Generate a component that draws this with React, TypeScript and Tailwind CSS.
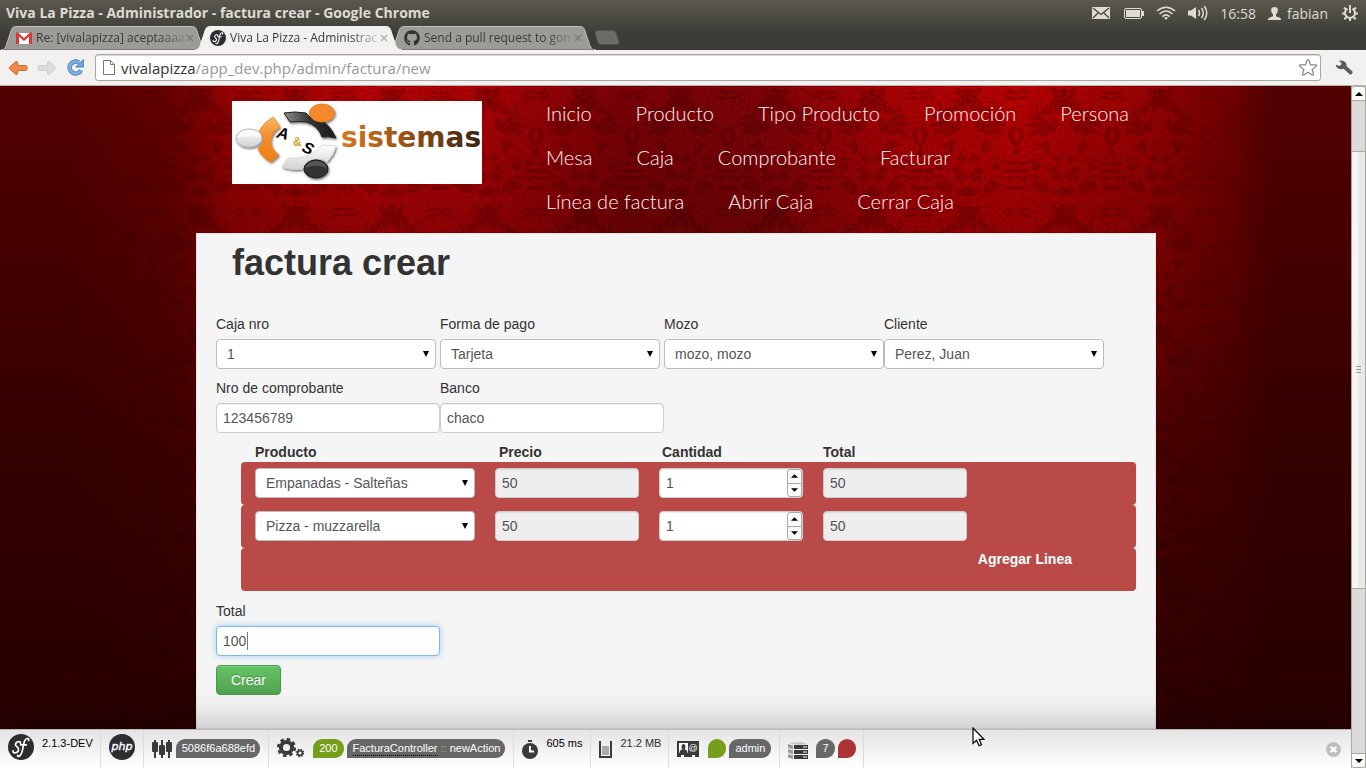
import type { ReactNode } from "react";
import { FaGithub } from "react-icons/fa";

function Sf({ className }: { className: string }) {
  return (
    <svg viewBox="0 0 26 26" className={className} aria-hidden="true">
      <circle cx="13" cy="13" r="13" fill="#2d2c31" />
      <g fill="none" stroke="#fff" strokeWidth="1.7" strokeLinecap="round" strokeLinejoin="round">
        <path d="M12.4 9.6c.6-1.7-.6-2.3-2-2-1.900.3-3.200 1.900-2.800 3.500.3 1.500 2.900 2 2.900 4.200 0 2.200-1.600 3.500-3.600 3.500-1.500 0-2.400-.900-1.800-2" />
        <path d="M20.600 6.500c.5-1.600-.500-2.200-1.500-2-2.300.4-3 3.300-3.600 6.500-.800 4.500-1.400 9.600-4.200 11.200-.900.500-1.900.2-1.700-.8M12.800 10.900h5.400" />
      </g>
    </svg>
  );
}

function Damask() {
  const half = (
    <g>
      <path d="M49 2c4 5 8 3 12-1 1 7-3 10-8 10 6 0 10 3 10 9-6 0-11-3-14-9z" />
      <path d="M49 14c7 2 9 7 8 13-5-2-8-6-8-13zM60 22c7-3 12 1 12 6-5 1-10-1-12-6z" />
      <path d="M64 38c6-8 15-11 19-6-7 0-10 3-12 7 6-4 12-4 16 1-7-2-11 1-15 4 6-2 10 0 12 5-7-4-11-1-16 1-4-3-6-7-4-12z" />
      <path d="M62 46c-6-2-7-8-4-14 1 5 4 6 7 8zM66 54c-4 4-4 10 1 14 1-5 4-8 8-9-4-1-6-3-9-5z" />
      <path d="M52 71c2-4 8-2 6 3-2 4-8 1-6-3zM56 82c5-2 8 1 8 4-4 2-7 0-8-4zM50 90c5-5 9-2 13 2-4 4-10 3-13-2z" />
      <path d="M72 80c5-5 9-3 9 2-3 3-7 2-9-2zM66 98c6-5 12-3 17 2-7 1-9 7-15 7-4-2-4-5-2-9zM50 101c3 3 6 4 10 4-3 4-7 6-11 4z" />
      <path d="M86 84h11v2H86zM88 101h9v2h-9zM84 8q6-6 13 0M82 14q7-6 15-1M76 16q3 8-3 14M70 74q8-3 14 2t13 0M72 92q8-5 14 0t11-2" />
      <path d="M97 60c-8-5-9-14-5-18 3-2 5 1 3 3-3 4-2 9 2 12z" />
      <path d="M97 70c-3-2-3-6 0-7z" />
    </g>
  );
  return (
    <svg className="[grid-area:1/1] h-full w-full" aria-hidden="true">
      <defs>
        <linearGradient id="glow">
          <stop offset="0.05" stopColor="#700000" stopOpacity="0" />
          <stop offset="0.12" stopColor="#700000" stopOpacity="0.6" />
          <stop offset="0.17" stopColor="#a00000" />
          <stop offset="0.27" stopColor="#bc0004" />
          <stop offset="0.36" stopColor="#b00004" />
          <stop offset="0.46" stopColor="#7c0206" />
          <stop offset="0.56" stopColor="#800408" />
          <stop offset="0.66" stopColor="#b00004" />
          <stop offset="0.75" stopColor="#c00000" />
          <stop offset="0.85" stopColor="#a00000" />
          <stop offset="0.915" stopColor="#760000" stopOpacity="0.8" />
          <stop offset="0.945" stopColor="#600000" stopOpacity="0" />
        </linearGradient>
        <linearGradient id="fade" x2="0" y2="1">
          <stop stopColor="#fff" />
          <stop offset="0.25" stopColor="#eee" />
          <stop offset="0.6" stopColor="#888" />
          <stop offset="1" stopColor="#222" />
        </linearGradient>
        <linearGradient id="across">
          <stop offset="0.07" stopColor="#000" />
          <stop offset="0.14" stopColor="#fff" />
          <stop offset="0.87" stopColor="#fff" />
          <stop offset="0.93" stopColor="#000" />
        </linearGradient>
        <linearGradient id="night" x2="0" y2="1">
          <stop stopColor="#000" stopOpacity="0" />
          <stop offset="0.55" stopColor="#000" stopOpacity="0.36" />
          <stop offset="1" stopColor="#000" stopOpacity="0.52" />
        </linearGradient>
        <mask id="glowMask"><rect width="100%" height="100%" fill="url(#fade)" /></mask>
        <mask id="acrossMask"><rect width="100%" height="100%" fill="url(#across)" /></mask>
        <pattern id="tile" x="152" y="0" width="96" height="117" patternUnits="userSpaceOnUse">
          <g fill="#200000" fillOpacity="0.16" stroke="#200000" strokeOpacity="0.3" strokeWidth="0.9">
            <g transform="translate(-1 0)">{half}</g>
            <g transform="translate(97 0) scale(-1 1)">{half}</g>
          </g>
        </pattern>
        <filter id="grain" x="0" y="0" width="100%" height="100%">
          <feTurbulence type="fractalNoise" baseFrequency="0.45" numOctaves="2" seed="4" />
          <feColorMatrix values="0 0 0 0 0.1  0 0 0 0 0  0 0 0 0 0  5 0 0 0 -2.300" />
        </filter>
      </defs>
      <rect width="100%" height="100%" fill="#520000" />
      <g mask="url(#glowMask)"><rect width="100%" height="100%" fill="url(#glow)" /></g>
      <g mask="url(#acrossMask)">
        <rect width="100%" height="100%" fill="url(#tile)" />
        <rect width="100%" height="100%" filter="url(#grain)" opacity="0.42" />
      </g>
      <rect width="100%" height="100%" fill="url(#night)" />
    </svg>
  );
}

function Logo() {
  return (
    <svg viewBox="0 0 250 83" className="block h-[83px] w-[250px] bg-white" role="img" aria-label="A&S sistemas">
      <defs>
        <linearGradient id="word"><stop stopColor="#d9781c" /><stop offset="0.55" stopColor="#8a4a12" /><stop offset="1" stopColor="#3a2412" /></linearGradient>
        <linearGradient id="or" x2="0" y2="1"><stop stopColor="#fbb567" /><stop offset="0.5" stopColor="#f28a24" /><stop offset="1" stopColor="#ee7f16" /></linearGradient>
        <linearGradient id="dk"><stop stopColor="#8d8d8d" /><stop offset="0.5" stopColor="#333" /><stop offset="1" stopColor="#181818" /></linearGradient>
        <linearGradient id="wh" x2="0" y2="1"><stop stopColor="#fff" /><stop offset="1" stopColor="#d2d2d2" /></linearGradient>
        <filter id="sh" x="-20%" y="-20%" width="150%" height="150%"><feDropShadow dx="1" dy="1.5" stdDeviation="1.2" floodOpacity="0.55" /></filter>
      </defs>
      <g filter="url(#sh)">
        <path d="M52 12Q63 10 74 12Q79 19 90 20Q97 23 104 37Q97 35 90 36Q86 24 74 21Q66 20 58 21Z" fill="url(#dk)" stroke="#222" />
        <path d="M41 16L48 26C36 34 36 46 47 54L39 61C31 57 27 51 26 47Q32 43 31 37Q30 32 27 30Q32 21 41 16Z" fill="url(#or)" stroke="#e27a12" strokeWidth=".6" />
        <path d="M50 66L56 57Q79 59 90 44L104 45Q102 54 95 61Q90 57 82 58Q74 60 71 68Q60 70 50 66Z" fill="url(#wh)" stroke="#ccc" strokeWidth=".6" />
        <ellipse cx="17" cy="37" rx="13" ry="9" fill="url(#wh)" stroke="#bbb" />
        <ellipse cx="90" cy="12" rx="12.500" ry="9" fill="#f5882a" stroke="#e87b16" />
        <ellipse cx="84" cy="68" rx="12" ry="9" fill="#333" stroke="#191919" />
      </g>
      <path d="M5 37Q17 34 29 36Q27 29 17 29Q6 30 5 37Z" fill="#fff" opacity=".7" />
      <path d="M73 67Q84 62 95 67Q92 60 84 60Q75 60 73 67Z" fill="#fff" opacity=".18" />
      <g fontFamily="Liberation Sans, sans-serif" fontStyle="italic" fontWeight="700">
        <text x="45" y="38" fontSize="16" transform="rotate(14 52 33)">A</text>
        <text x="61" y="45" fontSize="12" fontStyle="normal" fill="#d9a21f">&amp;</text>
        <text x="71" y="53" fontSize="16" transform="rotate(24 77 47)">S</text>
      </g>
      <text x="109" y="46" fontFamily="DejaVu Sans, sans-serif" fontWeight="700" fontSize="28" fill="url(#word)">sistemas</text>
    </svg>
  );
}

function Tab({ icon, title, active }: { icon: ReactNode; title: string; active?: boolean }) {
  return (
    <div className={`-ml-[13px] grid h-6 w-[207px] ${active ? "z-10" : ""}`}>
      <svg viewBox="0 0 207 24" preserveAspectRatio="none" className="[grid-area:1/1] h-full w-full" aria-hidden="true">
        <path
          d="M0 24C4 24 5 20 6 17L10 5C11 1 13 .5 16 .5H190C193 .5 195 1 196 5L200 17C201 21 203 24 207 24Z"
          fill={active ? "#f2f1f0" : "#9c9b98"}
          stroke={active ? "#f2f1f0" : "#c0bfbb"}
          strokeWidth="1"
        />
        {!active && <path d="M2 23.500H205" stroke="#7b7a77" />}
      </svg>
      <div className="[grid-area:1/1] flex items-center pl-[15px] pr-[14px]">
        <span className="flex h-4 w-4 shrink-0">{icon}</span>
        <a href="#" className="ml-1 whitespace-nowrap text-[12px] leading-5 text-[#3a3935] [mask-image:linear-gradient(to_right,#000_82%,rgba(0,0,0,0.2))]">
          {title}
        </a>
        <button aria-label="Cerrar pestaña" className="ml-auto flex">
          <svg viewBox="0 0 8 8" className="h-2 w-2"><path d="M1 1l6 6M7 1L1 7" stroke={active ? "#b5b3af" : "#7d7c78"} strokeWidth="1.500" /></svg>
        </button>
      </div>
    </div>
  );
}

function Chrome() {
  return (
    <header className="shrink-0 font-['Open_Sans','Noto_Sans',sans-serif]">
      <div className="bg-gradient-to-b from-[#5b594e] via-[#44433d] to-[#3c3b37] to-70%">
        <div className="flex h-[26px] items-center pl-[6px] pr-2 text-[#dfdbd2]">
          <h1 className="text-[14px] font-bold leading-5">Viva La Pizza - Administrador - factura crear - Google Chrome</h1>
          <div className="ml-auto flex items-center text-[14px]">
            <svg viewBox="0 0 18 12" className="mr-[14px] h-3 w-[18px]"><path d="M0 0h18v12H0z" fill="#dfdbd2" /><path d="M1 1l8 6.500L17 1M1 11l5.500-5.500M17 11l-5.500-5.500" fill="none" stroke="#454139" strokeWidth="1.200" /></svg>
            <svg viewBox="0 0 20 11" className="mr-3 h-[11px] w-5"><rect x=".5" y=".5" width="17" height="10" rx="1.500" fill="none" stroke="#dfdbd2" /><path d="M2 2h14v7H2zM18 3h2v5h-2z" fill="#dfdbd2" /></svg>
            <svg viewBox="0 0 20 14" className="mr-3 h-[14px] w-5" fill="none" stroke="#dfdbd2" strokeWidth="1.600"><path d="M1 5Q10-2.500 19 5M3.500 8Q10 2 16.500 8M6.300 10.800Q10 7 13.700 10.800" /><path d="M10 14l-2-2.200q2-1.500 4 0z" fill="#dfdbd2" stroke="none" /></svg>
            <svg viewBox="0 0 20 16" className="mr-3 h-4 w-5" fill="none" stroke="#dfdbd2" strokeWidth="1.500"><path d="M0 5.500h3L8 2v12l-5-3.500H0z" fill="#dfdbd2" stroke="none" /><path d="M10.500 5q2 3 0 6M13.500 3q3.500 5 0 10M16.300 1q5 7 0 14" /></svg>
            <span className="mr-3">16:58</span>
            <svg viewBox="0 0 13 13" className="mr-[6px] h-[13px] w-[13px]" fill="#dfdbd2"><path d="M6.500 0C9 0 10 1.500 9.800 3.500 9.700 5.500 8.700 6.800 8 7.300v2L12 10.700q1 .5 1 2.300H0q0-1.800 1-2.300L5 9.300v-2C4.300 6.800 3.300 5.500 3.200 3.500 3 1.500 4 0 6.500 0z" /></svg>
            <span className="mr-[14px]">fabian</span>
            <svg viewBox="0 0 16 16" className="h-4 w-4" fill="none" stroke="#dfdbd2"><path d="M5.500 3.600a5 5 0 1 0 5 0" strokeWidth="2" /><path d="M8 0v8" strokeWidth="2" /><path d="M13 8.500h3M0 8.500h3M8 13v3M11.700 12.200l2 2M4.300 12.200l-2 2M12 4.500l2-2M4 4.500l-2-2" strokeWidth="2" /></svg>
          </div>
        </div>
        <nav className="flex h-6 items-end pl-[14px]" aria-label="Pestañas">
          <Tab
            title="Re: [vivalapizza] aceptaaaa"
            icon={<svg viewBox="0 0 16 16" className="h-4 w-4"><path d="M1 3h14v11H1z" fill="#fff" /><path d="M0 3.500Q0 2 1.500 2L8 8l6.500-6Q16 2 16 3.500V14h-3V6.500L8 11 3 6.500V14H0z" fill="#d83b36" /></svg>}
          />
          <Tab active title="Viva La Pizza - Administrac" icon={<Sf className="h-4 w-4" />} />
          <Tab title="Send a pull request to gon" icon={<FaGithub className="h-4 w-4 text-[#33322f]" />} />
          <button aria-label="Nueva pestaña" className="-ml-[2px] mb-[5px] flex">
            <svg viewBox="0 0 26 15" className="h-[15px] w-[26px]"><path d="M3 .5H19Q21 .5 22 3L25 12Q25.500 14.500 23 14.500H7Q4.500 14.500 3.700 12L1 3Q.5 .5 3 .5Z" fill="#6c6b67" stroke="#53524e" /></svg>
          </button>
        </nav>
      </div>
      <div className="flex h-9 items-center border-b border-[#b5b2ad] bg-[#f2f1f0] pl-2 pr-[13px]">
        <button aria-label="Atrás" className="mr-[9px] flex"><svg viewBox="0 0 20 16" className="h-4 w-5"><path d="M8 1.500Q9.500 1 9.500 3V5.500H17.500Q19 5.500 19 7v2q0 1.500-1.500 1.500H9.500V13q0 2-1.500 1.500L1.500 8.800Q1 8 1.500 7.200z" fill="#ef8a4a" stroke="#d1672b" /></svg></button>
        <button aria-label="Adelante" className="mr-[10px] flex"><svg viewBox="0 0 20 16" className="h-4 w-5"><path d="M12 1.500Q10.500 1 10.500 3V5.500H2.500Q1 5.500 1 7v2q0 1.500 1.500 1.500H10.500V13q0 2 1.500 1.500L18.500 8.800Q19 8 18.500 7.200z" fill="#dedcd9" stroke="#cfcdca" /></svg></button>
        <button aria-label="Recargar" className="mr-[11px] flex"><svg viewBox="0 0 17 17" className="h-[17px] w-[17px]"><path d="M14 11.200A6 6 0 1 1 11.800 3.500" fill="none" stroke="#4a84c0" strokeWidth="4.400" /><path d="M16.300 .5V8H8.800z" fill="#6ea6de" stroke="#4a84c0" /><path d="M14 11.200A6 6 0 1 1 12.500 4" fill="none" stroke="#7db1e4" strokeWidth="2.600" /></svg></button>
        <div className="flex h-[27px] min-w-0 flex-1 items-center rounded-[3px] border border-[#a9a6a0] bg-white px-[7px] shadow-[inset_0_1px_0_#dddbd8]">
          <svg viewBox="0 0 12 15" className="h-[15px] w-3 shrink-0" fill="none" stroke="#777"><path d="M.5 .5H7.500L11.500 4.500V14.500H.5ZM7.500 .5V4.500H11.500" /></svg>
          <a href="#" className="ml-[6px] flex-1 text-[15px] leading-5 text-[#9a9895]"><span className="text-[#33322f]">vivalapizza</span>/app_dev.php/admin/factura/new</a>
          <button aria-label="Agregar a favoritos" className="-mr-[5px] flex"><svg viewBox="0 0 20 19" className="h-[19px] w-5"><path d="M10 1.500q.7 0 1 .8l1.500 4.500 5 .1q1.600.3.600 1.500l-4 3 1.400 4.700q.2 1.500-1.300.9L10 14.200 5.800 17q-1.500.6-1.300-.9l1.400-4.700-4-3q-1-1.200.6-1.500l5-.1L9 2.300q.3-.8 1-.8z" fill="#fff" stroke="#888" strokeWidth="1.200" /></svg></button>
        </div>
        <button aria-label="Configurar" className="ml-[14px] flex"><svg viewBox="0 0 18 16" className="h-4 w-[18px]"><path d="M4 .8Q9-.5 11 3q.8 1.500.4 3l5.600 5q1.300 1.300 0 2.700-1.300 1.300-2.700.2L8.600 8.800Q4 10.300 1.500 7 .8 6 .8 4.800L4.600 6 6.800 3.700z" fill="#5d5c5a" /></svg></button>
      </div>
    </header>
  );
}

const menu = [
  ["Inicio", "Producto", "Tipo Producto", "Promoción", "Persona"],
  ["Mesa", "Caja", "Comprobante", "Facturar"],
  ["Línea de factura", "Abrir Caja", "Cerrar Caja"],
];

const control = "h-[30px] rounded-[4px] border border-[#ccc] px-[6px] text-[14px] leading-5 text-[#555] shadow-[inset_0_1px_1px_rgba(0,0,0,0.075)] outline-none";

function Select({ id, value, label }: { id: string; value: string; label?: string }) {
  return (
    <div className="relative w-[220px]">
      <select id={id} aria-label={label} className="block h-[30px] w-full appearance-none rounded-[4px] border border-[#bbb] bg-white pl-[10px] text-[14px] leading-5 text-[#555] outline-none">
        <option>{value}</option>
      </select>
      <svg viewBox="0 0 6 6" className="pointer-events-none absolute right-[7px] top-3 h-[6px] w-[6px]"><path d="M0 0h6L3 6z" /></svg>
    </div>
  );
}

function Field({ id, label, children }: { id: string; label: string; children: ReactNode }) {
  return (
    <div className="pb-[9px]">
      <label htmlFor={id} className="mb-[5px] block leading-5">{label}</label>
      {children}
    </div>
  );
}

function Quantity({ id }: { id: string }) {
  return (
    <div className="relative w-36">
      <input id={id} aria-label="Cantidad" type="number" defaultValue={1} className={`${control} block w-full bg-white [appearance:textfield] [&::-webkit-inner-spin-button]:appearance-none`} />
      <div className="absolute inset-y-px right-px flex w-[15px] flex-col divide-y divide-[#aaa] rounded-[3px] border border-[#aaa] bg-[#fbfaf9]">
        <button type="button" aria-label="Más" className="flex flex-1 items-center justify-center"><svg viewBox="0 0 8 4" className="h-1 w-[7px]"><path d="M0 4h8L4 0z" /></svg></button>
        <button type="button" aria-label="Menos" className="flex flex-1 items-center justify-center"><svg viewBox="0 0 8 4" className="h-1 w-[7px]"><path d="M0 0h8L4 4z" /></svg></button>
      </div>
    </div>
  );
}

const columns = "grid grid-cols-[220px_144px_144px_144px] items-start gap-x-5 pl-[14px]";

function Page() {
  return (
    <main className="[grid-area:1/1] mx-auto flex w-[961px] max-w-full flex-col pl-px">
      <div className="flex h-[147px] shrink-0 pl-9 pt-[15px]">
        <Logo />
        <nav aria-label="Menú" className="-mt-[10px] ml-16 font-['Lato',sans-serif] text-[20px] font-light text-[#fff4f4]">
          {menu.map((row) => (
            <ul key={row[0]} className="flex h-11 items-center gap-11 whitespace-nowrap">
              {row.map((item) => <li key={item}><a href="#">{item}</a></li>)}
            </ul>
          ))}
        </nav>
      </div>
      <div className="flex-1 border border-[#e6e6e6] bg-[#f5f5f5] px-[19px] text-[14px] text-[#333]">
        <h2 className="ml-4 mt-[9px] text-[36px] font-bold leading-10">factura crear</h2>
        <form className="mt-[31px]">
          <div className="grid grid-cols-[224px_224px_220px_220px]">
            <Field id="caja" label="Caja nro"><Select id="caja" value="1" /></Field>
            <Field id="pago" label="Forma de pago"><Select id="pago" value="Tarjeta" /></Field>
            <Field id="mozo" label="Mozo"><Select id="mozo" value="mozo, mozo" /></Field>
            <Field id="cliente" label="Cliente"><Select id="cliente" value="Perez, Juan" /></Field>
            <Field id="nro" label="Nro de comprobante"><input id="nro" defaultValue="123456789" className={`${control} block w-full bg-white`} /></Field>
            <Field id="banco" label="Banco"><input id="banco" defaultValue="chaco" className={`${control} block w-56 bg-white`} /></Field>
          </div>
          <div className="ml-[25px]">
            <div className={`${columns} font-bold leading-5`}>
              <span>Producto</span><span className="pl-1">Precio</span><span className="pl-[3px]">Cantidad</span><span>Total</span>
            </div>
            {["Empanadas - Salteñas", "Pizza - muzzarella"].map((name, i) => (
              <div key={name} className={`${columns} h-[43px] rounded-[4px] bg-[#b94a48] pt-[6px]`}>
                <Select id={`producto${i}`} label="Producto" value={name} />
                <input aria-label="Precio" readOnly value="50" className={`${control} bg-[#eee]`} />
                <Quantity id={`cantidad${i}`} />
                <input aria-label="Total de línea" readOnly value="50" className={`${control} bg-[#eee]`} />
              </div>
            ))}
            <div className="flex h-[43px] items-start justify-end rounded-[4px] bg-[#b94a48] pr-16 pt-px">
              <a href="#" className="font-bold leading-5 text-white">Agregar Linea</a>
            </div>
          </div>
          <div className="mt-[10px]">
            <Field id="total" label="Total">
              <div className="relative w-56">
                <input id="total" defaultValue="100" className="block h-[30px] w-full rounded-[4px] border border-[#7cbcec] bg-white px-[6px] text-[14px] leading-5 text-[#555] shadow-[0_0_6px_rgba(82,168,236,0.5)] outline-none" />
                <span className="absolute left-[31px] top-[6px] h-[18px] w-px bg-[#777]" />
              </div>
            </Field>
          </div>
          <button type="submit" className="block h-[30px] rounded-[4px] border border-[#4a9a4a] bg-gradient-to-b from-[#62c462] to-[#51a351] px-[14px] leading-5 text-white shadow-[inset_0_1px_0_rgba(255,255,255,0.2)] [text-shadow:0_-1px_0_rgba(0,0,0,0.25)]">Crear</button>
        </form>
      </div>
    </main>
  );
}

function Section({ children, className }: { children: ReactNode; className: string }) {
  return <li className={`flex h-full shrink-0 border-r border-[#dcdcdc] pt-1 ${className}`}>{children}</li>;
}

function Badge({ children, className }: { children?: ReactNode; className: string }) {
  return <span className={`mt-[5px] flex h-[19px] items-center whitespace-nowrap rounded-[9px] rounded-bl-none text-white ${className}`}>{children}</span>;
}

function DebugBar() {
  return (
    <footer className="relative flex h-[39px] shrink-0 border-t border-[#bbb] bg-gradient-to-b from-[#e4e4e4] to-white font-['Liberation_Sans',Arial,sans-serif] text-[11px] text-black shadow-[0_0_40px_rgba(0,0,0,0.3)]">
      <ul className="flex h-full">
        <Section className="gap-2 pl-2 pr-[7px]"><Sf className="h-[26px] w-[26px]" /><span className="mt-px leading-4">2.1.3-DEV</span></Section>
        <Section className="px-2">
          <svg viewBox="0 0 26 26" className="h-[26px] w-[26px]"><circle cx="13" cy="13" r="13" fill="#2d2c31" /><text x="13" y="16" textAnchor="middle" fontFamily="DejaVu Sans, sans-serif" fontStyle="italic" fontSize="11" fill="#fff" stroke="#fff" strokeWidth=".4">php</text></svg>
        </Section>
        <Section className="gap-1 px-2">
          <svg viewBox="0 0 20 18" className="mt-[6px] h-[18px] w-5" fill="#3a3a3a"><path d="M2 0h2v18H2zM9 0h2v18H9zM16 0h2v18h-2z" /><rect y="2" width="6" height="10" rx="1" /><rect x="7" y="5" width="6" height="10" rx="1" /><rect x="14" y="2" width="6" height="10" rx="1" /></svg>
          <Badge className="bg-[#676767] pl-[6px] pr-[5px]">5086f6a688efd</Badge>
        </Section>
        <Section className="px-2">
          <svg viewBox="0 0 27 20" className="mr-[9px] mt-1 h-5 w-[27px]" fill="none" stroke="#3a3a3a"><circle cx="9.500" cy="9.500" r="5.600" strokeWidth="4" /><circle cx="9.500" cy="9.500" r="8.300" strokeWidth="2.500" strokeDasharray="3.500 3.018" /><circle cx="23" cy="15" r="2.400" strokeWidth="1.700" /><circle cx="23" cy="15" r="3.700" strokeWidth="1.200" strokeDasharray="1.500 1.406" /></svg>
          <Badge className="mr-[3px] bg-[#759e1a] px-[6px]">200</Badge>
          <Badge className="bg-[#676767] pl-[6px] pr-[5px]"><a href="#" className="border-b border-dotted border-black leading-[14px]">FacturaController</a><span className="mx-[3px] text-[#aaa]">::</span><span>newAction</span></Badge>
        </Section>
        <Section className="gap-2 px-2">
          <svg viewBox="0 0 16 19" className="mt-[6px] h-[19px] w-4"><path d="M6 0h4v2H6z" fill="#3a3a3a" /><circle cx="8" cy="11" r="8" fill="#3a3a3a" /><path d="M8 6v5.500h4" fill="none" stroke="#fff" strokeWidth="2" /></svg>
          <span className="mt-px leading-4">605 ms</span>
        </Section>
        <Section className="gap-2 pl-2 pr-[7px]">
          <svg viewBox="0 0 13 17" className="mt-[7px] h-[17px] w-[13px]"><path d="M1 0v16h11V0" fill="none" stroke="#3a3a3a" strokeWidth="2" /><path d="M3 5h7v9H3z" fill="#aaa" /></svg>
          <span className="mt-px leading-4 text-[#2f2f2f]">21.2 MB</span>
        </Section>
        <Section className="px-2">
          <svg viewBox="0 0 22 16" className="mr-[9px] mt-[7px] h-4 w-[22px]"><path d="M0 0h22v16H0z" fill="#3a3a3a" /><path d="M2 2h9v10H2z" fill="#fff" /><path d="M6.500 3q2 0 2 2.500Q8 8 7.500 8.300q3 .5 3 3.700h-8q0-3.200 3-3.700Q4.500 7.500 4.500 5.500 4.500 3 6.500 3z" fill="#3a3a3a" /><text x="11.500" y="10" fontFamily="Liberation Sans, sans-serif" fontSize="9" fill="#fff">@</text><path d="M4 14h3v2H4zM15 14h3v2h-3z" fill="#fff" /></svg>
          <Badge className="mr-[3px] w-[18px] bg-[#759e1a]" />
          <Badge className="bg-[#676767] px-[6px]">admin</Badge>
        </Section>
        <Section className="pl-2 pr-[7px]">
          <svg viewBox="0 0 20 17" className="mr-2 mt-2 h-[17px] w-5"><path d="M0 2l5 1.500v4L0 5.500zM0 7l5 1.500v4l-5-2zM0 12l5 1.500V17l-5-1.500z" fill="#999" /><path d="M0 1L14 0l6 2.500H6z" fill="#c4c4c4" /><path d="M6 3h14v4H6zM6 8h14v4H6zM6 13h14v4H6z" fill="#3a3a3a" /><path d="M15 5h4M15 10h4M15 15h4" stroke="#fff" /></svg>
          <Badge className="mr-[3px] bg-[#676767] px-[6px]">7</Badge>
          <Badge className="w-[18px] bg-[#aa3434]" />
        </Section>
      </ul>
      <button aria-label="Cerrar barra" className="ml-auto mr-[10px] flex self-center"><svg viewBox="0 0 15 15" className="h-[15px] w-[15px]"><circle cx="7.500" cy="7.500" r="7.500" fill="#bfbfbf" /><path d="M4.800 4.800l5.400 5.400M10.200 4.800l-5.400 5.400" stroke="#fff" strokeWidth="2.400" /></svg></button>
    </footer>
  );
}

function ScrollBar() {
  return (
    <div className="relative flex w-[15px] shrink-0 flex-col border-x border-[#aaa8a4] bg-[#dcdbd9]" aria-hidden="true">
      <div className="flex h-[15px] items-center justify-center rounded-t-[3px] border-y border-[#aaa8a4] bg-[#fbfaf9]"><svg viewBox="0 0 8 4" className="h-1 w-2"><path d="M0 4h8L4 0z" /></svg></div>
      <div className="grow-[50] basis-0" />
      <div className="flex grow-[437] basis-0 flex-col items-center justify-center gap-[2px] border-y border-[#aaa8a4] bg-gradient-to-r from-[#f8f6f4] from-50% to-[#ebe9e7] to-50%">
        <span className="h-px w-[5px] bg-[#999]" /><span className="h-px w-[5px] bg-[#999]" /><span className="h-px w-[5px] bg-[#999]" />
      </div>
      <div className="grow-[165] basis-0" />
      <div className="flex h-[15px] items-center justify-center rounded-b-[3px] border-y border-[#aaa8a4] bg-[#fbfaf9]"><svg viewBox="0 0 8 4" className="h-1 w-2"><path d="M0 0h8L4 4z" /></svg></div>
    </div>
  );
}

export default function App() {
  return (
    <div className="flex h-screen flex-col overflow-hidden font-['Liberation_Sans',Arial,sans-serif]">
      <Chrome />
      <div className="flex min-h-0 flex-1">
        <div className="flex min-w-0 flex-1 flex-col overflow-hidden">
          <div className="grid min-h-0 flex-1 overflow-hidden">
            <Damask />
            <Page />
          </div>
          <DebugBar />
        </div>
        <ScrollBar />
      </div>
      <svg viewBox="0 0 13 20" className="pointer-events-none absolute left-[972px] top-[727px] h-5 w-[13px]" aria-hidden="true"><path d="M1 1V16.500L4.600 13.200 7 18.700 9.500 17.600 7.200 12.300H12Z" fill="#fff" stroke="#000" strokeWidth="1.200" /></svg>
    </div>
  );
}
